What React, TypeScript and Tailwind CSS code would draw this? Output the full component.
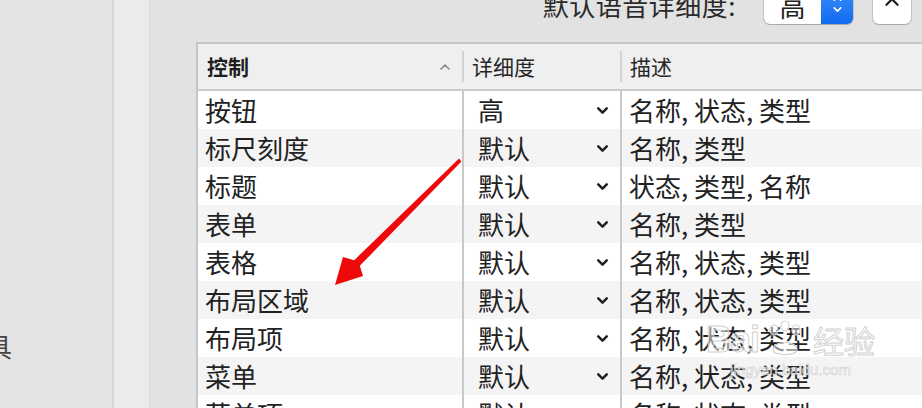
import { ChevronDown, ChevronUp } from "lucide-react";

const font = { fontFamily: '"Noto Sans CJK SC", "Noto Sans", sans-serif' };

const rows = [
  ["按钮", "高", "名称, 状态, 类型"],
  ["标尺刻度", "默认", "名称, 类型"],
  ["标题", "默认", "状态, 类型, 名称"],
  ["表单", "默认", "名称, 类型"],
  ["表格", "默认", "名称, 状态, 类型"],
  ["布局区域", "默认", "名称, 状态, 类型"],
  ["布局项", "默认", "名称, 状态, 类型"],
  ["菜单", "默认", "名称, 状态, 类型"],
  ["菜单项", "默认", "名称, 状态, 类型"],
];

function Arrow() {
  return (
    <svg className="pointer-events-none absolute left-0 top-0" width="922" height="408">
      <polygon
        points="459,158.6 354.2,260.2 343,257 335,285 363,276 359.8,265.8 461.4,161.4"
        fill="#ee0a0a"
      />
    </svg>
  );
}

function Watermark() {
  return (
    <div className="pointer-events-none absolute left-[706px] top-[320px] flex flex-col items-center">
      <div
        className="flex items-end text-[36px] font-bold leading-none text-white/50 [-webkit-text-stroke:1px_#d2d2d2]"
        style={{ fontFamily: '"Liberation Sans Narrow", "Liberation Sans", "Noto Sans CJK SC", sans-serif' }}
      >
        <span className="tracking-[-1px]">Bai</span>
        <svg width="48" height="38" viewBox="0 0 40 38" className="mx-0.5">
          <g fill="rgba(255,255,255,0.5)" stroke="#d2d2d2" strokeWidth="1.2">
            <ellipse cx="9" cy="10" rx="4" ry="5" />
            <ellipse cx="20" cy="6" rx="4" ry="5" />
            <ellipse cx="31" cy="10" rx="4" ry="5" />
            <path d="M8 30 C8 20 32 20 32 30 C32 36 8 36 8 30 Z" />
          </g>
        </svg>
        <span className="ml-0.5 text-[31px] font-normal">经验</span>
      </div>
      <div className="mt-[4px] text-[15px] leading-none text-white/50 [-webkit-text-stroke:0.6px_#d2d2d2]" style={{ fontFamily: '"Liberation Sans", sans-serif' }}>
        jingyan.baidu.com
      </div>
    </div>
  );
}

export default function App() {
  return (
    <div className="relative flex h-[408px] w-[922px] overflow-hidden text-[#222]" style={font}>
      {/* sidebar */}
      <div className="flex w-[114px] shrink-0 flex-col border-r-2 border-[#d4d4d4] bg-[#e4e4e4] pt-[329px]">
        <span className="-ml-[14px] text-[26px] leading-[34px] text-[#444]">具</span>
      </div>
      <div className="w-[36px] shrink-0 border-r border-[#dcdcdc] bg-[#ebebeb]" />

      {/* main */}
      <div className="flex min-w-0 flex-1 flex-col bg-[#e2e2e2]">
        <div className="flex h-[42px] shrink-0 items-start justify-end pr-[11px]">
          <div className="-mt-[12px] mr-[28px] text-[26px] leading-[34px] tracking-[0.5px] text-[#2a2a2a]">默认语音详细度:</div>
          <div className="-mt-[12px] flex h-[36px] w-[89px] overflow-hidden rounded-[6px] bg-white shadow-[0_0_0_1px_rgba(0,0,0,0.12),0_1px_1px_rgba(0,0,0,0.15)]">
            <div className="flex flex-1 items-end justify-center pb-[1px] text-[26px] leading-[34px]">高</div>
            <div className="flex w-[32px] flex-col items-center justify-end bg-gradient-to-b from-[#3a8df7] to-[#0f6bf0] pb-[8px]">
              <ChevronUp className="-mb-[2px] h-[13px] w-[13px] text-white" strokeWidth={3} />
              <ChevronDown className="h-[13px] w-[13px] text-white" strokeWidth={3} />
            </div>
          </div>
          <div className="-mt-[12px] ml-[20px] flex h-[36px] w-[38px] items-end justify-center rounded-[6px] bg-white pb-[11px] shadow-[0_0_0_1px_rgba(0,0,0,0.12),0_1px_1px_rgba(0,0,0,0.15)]">
            <ChevronUp className="h-[22px] w-[22px] text-[#222]" strokeWidth={2.5} />
          </div>
        </div>

        <div className="ml-[46px] flex min-h-0 flex-1 flex-col overflow-hidden border-l-2 border-t-2 border-[#c6c6c6] bg-white">
          {/* header */}
          <div className="flex h-[47px] shrink-0 border-b-2 border-[#cbcbcb] bg-[#efefef] text-[21px]">
            <div className="flex w-[264px] items-center justify-between pl-[9px] pr-[9px]">
              <span className="font-bold text-[#1e1e1e]">控制</span>
              <ChevronUp className="h-[16px] w-[16px] text-[#8c8c8c]" strokeWidth={2.5} />
            </div>
            <div className="my-[7px] w-[2px] bg-[#d3d3d3]" />
            <div className="flex w-[156px] items-center pl-[8px] text-[#262626]">详细度</div>
            <div className="my-[7px] w-[2px] bg-[#d3d3d3]" />
            <div className="flex flex-1 items-center pl-[8px] text-[#262626]">描述</div>
          </div>
          {/* body */}
          <div className="flex flex-col text-[26px]">
            {rows.map(([name, level, desc], i) => (
              <div key={name} className={`flex h-[38px] shrink-0 ${i % 2 === 1 ? "bg-[#f4f4f4]" : "bg-white"}`}>
                <div className="flex w-[264px] items-center pl-[7px] leading-none">{name}</div>
                <div className="flex w-[158px] items-center justify-between border-l-2 border-[#c8c8c8] pl-[14px] pr-[9px] leading-none">
                  <span>{level}</span>
                  <ChevronDown className="h-[17px] w-[17px] text-[#1e1e1e]" strokeWidth={3.5} />
                </div>
                <div className="flex flex-1 items-center whitespace-nowrap border-l-2 border-[#c8c8c8] pl-[7px] leading-none">{desc}</div>
              </div>
            ))}
          </div>
        </div>
      </div>

      <Arrow />
      <Watermark />
    </div>
  );
}
